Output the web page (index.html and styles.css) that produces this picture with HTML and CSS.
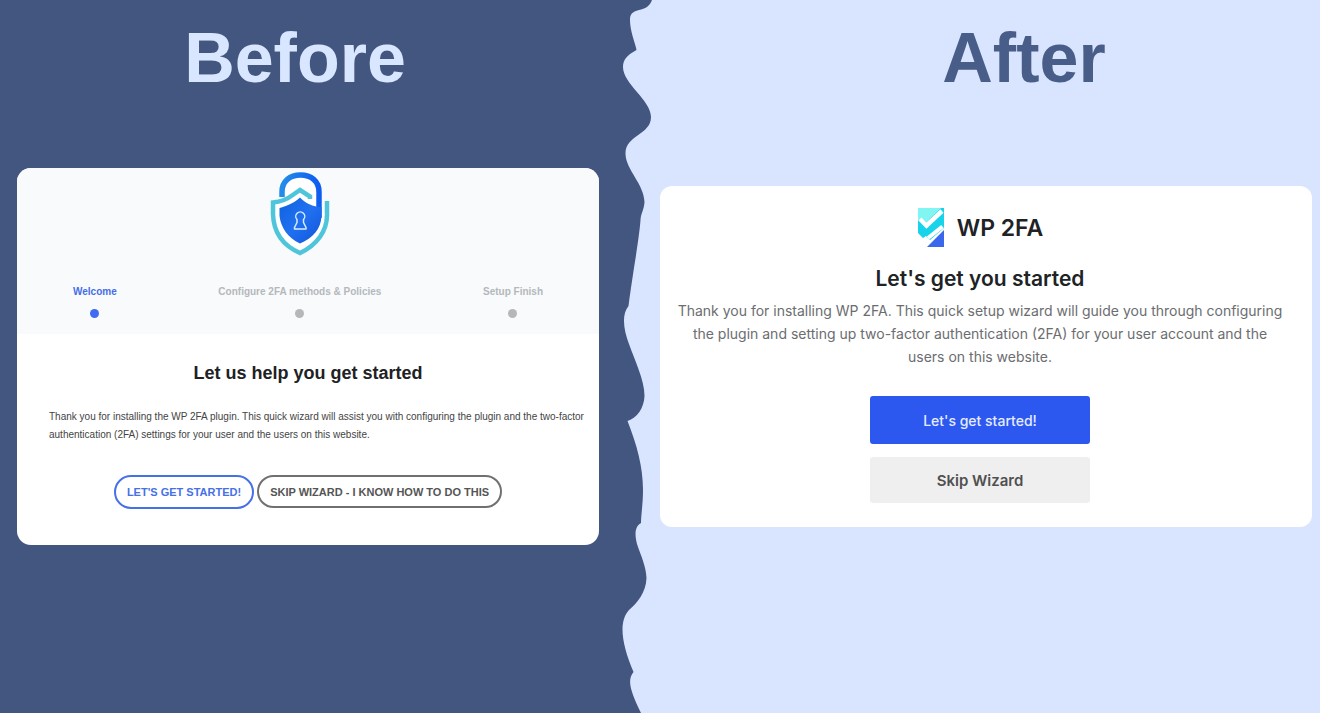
FILE: index.html
```html
<!DOCTYPE html>
<html lang="en">
<head>
<meta charset="utf-8">
<title>Setup wizard: before and after</title>
<link rel="stylesheet" href="styles.css">
</head>
<body>
<main class="compare">
  <section class="side side-before">
    <h1 class="side-title">Before</h1>
    <article class="card old-card">
      <header class="old-header">
        <div class="old-logo-row">
          <svg class="old-logo" viewBox="0 0 60 84" aria-hidden="true">
            <defs>
              <linearGradient id="shield" x1="0" y1="0" x2="1" y2="1">
                <stop offset="0" stop-color="#0b62dc"/>
                <stop offset=".5" stop-color="#2270f2"/>
                <stop offset="1" stop-color="#0f55d8"/>
              </linearGradient>
              <linearGradient id="shackle" x1="0" y1="0" x2="1" y2="0">
                <stop offset="0" stop-color="#238ce8"/>
                <stop offset="1" stop-color="#0f5df0"/>
              </linearGradient>
            </defs>
            <path d="M12 25V20C12 9 20 3 30.500 3S49 9 49 20V42L57 40C57 59 47 73 30 81C14 74 3.500 61 3 42V30Z" fill="#fff"/>
            <path d="M12 25V20C12 9 20 3 30.500 3S49 9 49 20V46" fill="none" stroke="url(#shackle)" stroke-width="5.500"/>
            <path d="M40 27V24.500L30 18L22 23.500Q14 29.500 3 30.500V42C3.500 61 14 74 30 81C47 73 57 59 57 43V29" fill="none" stroke="#4fc5dc" stroke-width="4.500"/>
            <path d="M30 25.500C24 31 17 34 9.500 36V44C11 56 18 66 30 71.500C43 66 51 57 51.500 44V35C43 35 35 31 30 25.500Z" fill="url(#shield)"/>
            <path d="M27 50.500L24.500 55.500V57H36V55.500L33.500 50.500V47.500A4.500 4.500 0 1 0 27 47.500Z" fill="none" stroke="#d5eeff" stroke-width="1.500" stroke-linejoin="round"/>
          </svg>
        </div>
        <ol class="steps">
          <li class="step step-active">Welcome</li>
          <li class="step">Configure 2FA methods &amp; Policies</li>
          <li class="step">Setup Finish</li>
        </ol>
      </header>
      <div class="old-body">
        <h2 class="old-title">Let us help you get started</h2>
        <p class="old-text">Thank you for installing the WP 2FA plugin. This quick wizard will assist you with configuring the plugin and the two-factor authentication (2FA) settings for your user and the users on this website.</p>
        <div class="old-actions">
          <button class="pill pill-primary" type="button">LET'S GET STARTED!</button>
          <button class="pill" type="button">SKIP WIZARD - I KNOW HOW TO DO THIS</button>
        </div>
      </div>
    </article>
  </section>

  <svg class="divider" viewBox="616 0 40 713" preserveAspectRatio="none" aria-hidden="true">
    <path d="M616 0H652C650 6 645 9 639 10C632 12 630 14 630 20C630 31 635 42 636.500 50C627 55 623 60 623 67C623 84 651 100 651 117C651 135 625 135 625.500 154C626 170 644 184 644.500 202C644 210 641 213 640.500 220C639 240 634 265 628.500 306C621 315 624 331 629 344C635 361 644.500 380 644.500 396C644 408 637 418 627.500 421C637 445 643 467 643 490C643 504 641 515 641 523C634 527 635 536 637 544C641 556 646 566 646.500 578C646 593 637 603 629 610C618 622 622 645 633.500 672C627 680 630 690 641 713H616Z"/>
  </svg>

  <section class="side side-after">
    <h1 class="side-title">After</h1>
    <article class="card new-card">
      <div class="brand">
        <svg class="brand-mark" viewBox="0 0 28 41" aria-hidden="true">
          <path d="M1 1H27V21L13 33L9 29L6 31L1 26Z" fill="#18d3ea"/>
          <path d="M1 1H24L9.500 15L5 11L1 14Z" fill="#80f5f1"/>
          <path d="M27 23V40H10Z" fill="#3a68ed"/>
          <path d="M3 12L9.500 18.500L25 4" fill="none" stroke="#fff" stroke-width="4.500"/>
          <path d="M11 31L25.500 19.500" fill="none" stroke="#fff" stroke-width="4"/>
        </svg>
        <span class="brand-name">WP 2FA</span>
      </div>
      <h2 class="new-title">Let's get you started</h2>
      <p class="new-text">Thank you for installing WP 2FA. This quick setup wizard will guide you through configuring the plugin and setting up two-factor authentication (2FA) for your user account and the users on this website.</p>
      <div class="new-actions">
        <button class="block-button block-primary" type="button">Let's get started!</button>
        <button class="block-button block-secondary" type="button">Skip Wizard</button>
      </div>
    </article>
  </section>
</main>
</body>
</html>
```
FILE: styles.css
```css
* {
  box-sizing: border-box;
}

body {
  margin: 0;
  background: #d9e4ff;
  font-family: "Liberation Sans", Arial, sans-serif;
}

h1, h2, p, ol {
  margin: 0;
  padding: 0;
}

.compare {
  display: grid;
  grid-template-columns: minmax(0, 616fr) 40px minmax(0, 664fr);
  min-height: 100vh;
}

.side {
  padding-top: 18px;
  padding-bottom: 18px;
}

.side-before {
  padding-left: 17px;
  padding-right: 17px;
  background: #43567f;
}

.side-after {
  padding-left: 4px;
  padding-right: 8px;
}

.side-title {
  font-size: 70px;
  line-height: 80px;
  text-align: center;
}

.side-before .side-title {
  padding-right: 26px;
  color: #d9e6ff;
}

.side-after .side-title {
  padding-left: 76px;
  color: #485d88;
}

.divider {
  display: block;
  width: 40px;
  height: 100%;
  fill: #43567f;
}

.card {
  overflow: hidden;
  background: #fff;
}

.old-card {
  margin-top: 70px;
  border-radius: 14px;
}

.old-header {
  padding: 4px 56px 16px;
  background: #f8fafc;
}

.old-logo-row {
  display: flex;
  justify-content: center;
  padding-right: 16px;
  margin-bottom: 28px;
}

.old-logo {
  width: 60px;
  height: 84px;
}

.steps {
  display: flex;
  justify-content: space-between;
  list-style: none;
}

.step {
  display: flex;
  flex-direction: column;
  align-items: center;
  gap: 10px;
  color: #b4b8bb;
  font-size: 10px;
  font-weight: bold;
  line-height: 15px;
}

.step::after {
  width: 9px;
  height: 9px;
  border-radius: 50%;
  background: #b4b8ba;
  content: "";
}

.step-active {
  color: #456de8;
}

.step-active::after {
  background: #3f6cf0;
}

.old-body {
  padding: 28px 0 36px;
}

.old-title {
  color: #202124;
  font-size: 18px;
  line-height: 22px;
  text-align: center;
}

.old-text {
  margin-top: 24px;
  padding: 0 4px 0 32px;
  color: #444;
  font-size: 10px;
  line-height: 18px;
}

.old-actions {
  display: flex;
  justify-content: center;
  align-items: flex-start;
  gap: 3px;
  margin-top: 31px;
}

.pill {
  height: 33px;
  padding: 0 11px;
  border: 2px solid #707070;
  border-radius: 17px;
  background: #fff;
  color: #555;
  font: bold 11px "Liberation Sans", Arial, sans-serif;
}

.pill-primary {
  height: 34px;
  border-color: #4670e8;
  color: #4670e8;
}

.new-card {
  margin-top: 88px;
  padding: 21px 28px 24px 16px;
  border-radius: 12px;
  font-family: Inter, sans-serif;
  text-align: center;
}

.brand {
  display: flex;
  justify-content: center;
  align-items: center;
  gap: 12px;
}

.brand-mark {
  width: 28px;
  height: 41px;
}

.brand-name {
  color: #202326;
  font-size: 23px;
  font-weight: 600;
  line-height: 28px;
}

.new-title {
  margin-top: 17px;
  color: #202326;
  font-size: 21px;
  font-weight: 600;
  line-height: 28px;
}

.new-text {
  margin-top: 6px;
  color: #6b6d70;
  font-size: 14px;
  line-height: 23px;
}

.new-actions {
  display: flex;
  flex-direction: column;
  align-items: center;
  gap: 13px;
  margin-top: 28px;
}

.block-button {
  width: 220px;
  border: 0;
  border-radius: 3px;
  font-family: Inter, sans-serif;
}

.block-primary {
  height: 48px;
  background: #2c58f0;
  color: #e6ecff;
  font-size: 14px;
  font-weight: 500;
}

.block-secondary {
  height: 46px;
  background: #efefef;
  color: #505050;
  font-size: 15px;
  font-weight: 600;
}
```
